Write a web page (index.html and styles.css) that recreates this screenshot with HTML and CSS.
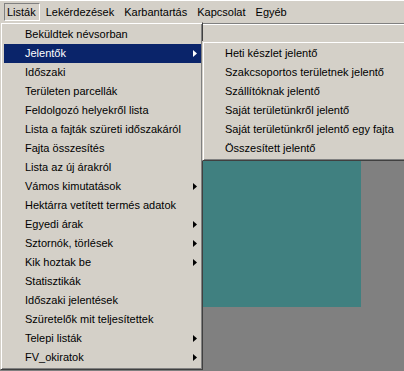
FILE: index.html
```html
<!DOCTYPE html>
<html lang="hu">
<head>
    <meta charset="UTF-8">
    <meta name="viewport" content="width=device-width, initial-scale=1.0">
    <title>Listák</title>
    <link rel="stylesheet" href="styles.css">
</head>
<body>
    <div class="window">
        <div class="menubar">
            <span class="bar-item pressed">Listák</span>
            <span class="bar-item">Lekérdezések</span>
            <span class="bar-item">Karbantartás</span>
            <span class="bar-item">Kapcsolat</span>
            <span class="bar-item">Egyéb</span>
        </div>
        <div class="toolbar"></div>
        <div class="client">
            <div class="child"></div>
        </div>
    </div>

    <!-- Listák legördülő menü -->
    <div class="menu main-menu">
        <div class="item">Beküldtek névsorban</div>
        <div class="item active has-sub">Jelentők<svg class="arrow" width="4" height="7" viewBox="0 0 4 7"><polygon points="0,0 4,3.5 0,7"/></svg></div>
        <div class="item">Időszaki</div>
        <div class="item">Területen parcellák</div>
        <div class="item">Feldolgozó helyekről lista</div>
        <div class="item">Lista a fajták szüreti időszakáról</div>
        <div class="item">Fajta összesítés</div>
        <div class="item">Lista az új árakról</div>
        <div class="item has-sub">Vámos kimutatások<svg class="arrow" width="4" height="7" viewBox="0 0 4 7"><polygon points="0,0 4,3.5 0,7"/></svg></div>
        <div class="item">Hektárra vetített termés adatok</div>
        <div class="item has-sub">Egyedi árak<svg class="arrow" width="4" height="7" viewBox="0 0 4 7"><polygon points="0,0 4,3.5 0,7"/></svg></div>
        <div class="item has-sub">Sztornók, törlések<svg class="arrow" width="4" height="7" viewBox="0 0 4 7"><polygon points="0,0 4,3.5 0,7"/></svg></div>
        <div class="item has-sub">Kik hoztak be<svg class="arrow" width="4" height="7" viewBox="0 0 4 7"><polygon points="0,0 4,3.5 0,7"/></svg></div>
        <div class="item">Statisztikák</div>
        <div class="item">Időszaki jelentések</div>
        <div class="item">Szüretelők mit teljesítettek</div>
        <div class="item has-sub">Telepi listák<svg class="arrow" width="4" height="7" viewBox="0 0 4 7"><polygon points="0,0 4,3.5 0,7"/></svg></div>
        <div class="item has-sub">FV_okiratok<svg class="arrow" width="4" height="7" viewBox="0 0 4 7"><polygon points="0,0 4,3.5 0,7"/></svg></div>
    </div>

    <!-- Jelentők almenü -->
    <div class="menu sub-menu">
        <div class="item">Heti készlet jelentő</div>
        <div class="item">Szakcsoportos területnek jelentő</div>
        <div class="item">Szállítóknak jelentő</div>
        <div class="item">Saját területünkről jelentő</div>
        <div class="item">Saját területünkről jelentő egy fajta</div>
        <div class="item">Összesített jelentő</div>
    </div>
</body>
</html>
```

FILE: styles.css
```css
body {
    margin: 0;
    width: 404px;
    height: 371px;
    overflow: hidden;
    position: relative;
    background-color: #d4d0c8;
    font-family: "Liberation Sans", Arial, sans-serif;
    font-size: 11px;
    color: #000;
}

.window {
    height: 100%;
    display: flex;
    flex-direction: column;
    border-top: 1px solid #fff;
    box-sizing: border-box;
}

.menubar {
    height: 22px;
    display: flex;
    align-items: center;
    padding-left: 4px;
    border-bottom: 1px solid #808080;
}

.bar-item {
    padding: 2px 3px 1px 2px;
    border: 1px solid transparent;
    margin-right: 3px;
    line-height: 13px;
}

.bar-item.pressed {
    border-color: #808080 #fff #fff #808080;
}

.toolbar {
    height: 19px;
    border-top: 1px solid #fff;
}

.client {
    flex: 1;
    background-color: #808080;
    padding-top: 18px;
}

.child {
    width: 361px;
    height: 245px;
    background-color: #408080;
}

.menu {
    position: absolute;
    box-sizing: border-box;
    background-color: #d4d0c8;
    border: 1px solid;
    border-color: #d4d0c8 #404040 #404040 #d4d0c8;
    box-shadow: inset 1px 1px 0 #fff, inset -1px -1px 0 #808080;
    padding: 2px 1px 2px 3px;
}

.main-menu {
    left: 0;
    top: 22px;
    width: 203px;
}

.sub-menu {
    left: 202px;
    top: 41px;
    width: 212px;
}

.item {
    height: 19px;
    line-height: 19px;
    padding-left: 21px;
    display: flex;
    align-items: center;
    justify-content: space-between;
    white-space: nowrap;
}

.sub-menu .item {
    padding-left: 19px;
}

.item.active {
    background-color: #0a246a;
    color: #fff;
}

.arrow {
    margin-right: 4px;
    fill: #000;
}

.item.active .arrow {
    fill: #fff;
}
```
